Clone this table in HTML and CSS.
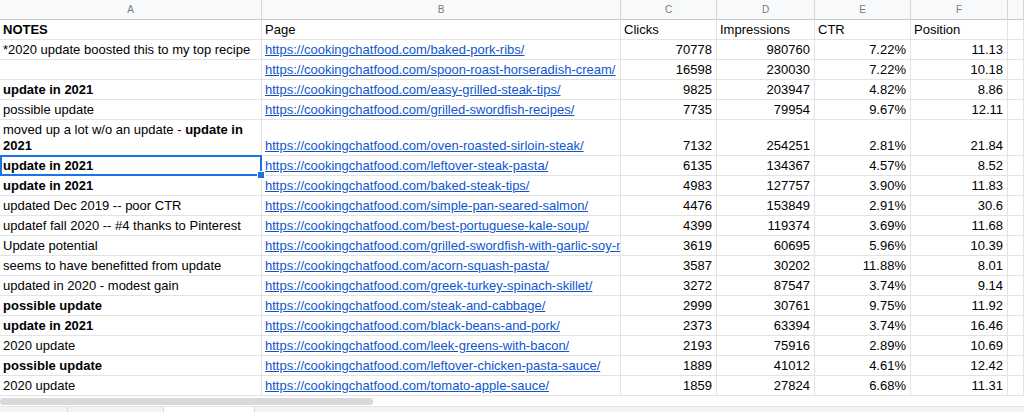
FILE: index.html
```html
<!DOCTYPE html>
<html>
<head>
<meta charset="utf-8">
<link rel="stylesheet" href="styles.css">
</head>
<body>
<div class="sheet">
  <div class="row colhead">
    <div class="c">A</div><div class="c">B</div><div class="c">C</div><div class="c">D</div><div class="c">E</div><div class="c">F</div><div class="c"></div>
  </div>
  <div class="row">
    <div class="c"><b>NOTES</b></div><div class="c">Page</div><div class="c">Clicks</div><div class="c">Impressions</div><div class="c">CTR</div><div class="c">Position</div><div class="c"></div>
  </div>
  <div class="row">
    <div class="c">*2020 update boosted this to my top recipe</div><div class="c"><a href="#">https://cookingchatfood.com/baked-pork-ribs/</a></div><div class="c n">70778</div><div class="c n">980760</div><div class="c n">7.22%</div><div class="c n">11.13</div><div class="c"></div>
  </div>
  <div class="row">
    <div class="c"></div><div class="c"><a href="#">https://cookingchatfood.com/spoon-roast-horseradish-cream/</a></div><div class="c n">16598</div><div class="c n">230030</div><div class="c n">7.22%</div><div class="c n">10.18</div><div class="c"></div>
  </div>
  <div class="row">
    <div class="c"><b>update in 2021</b></div><div class="c"><a href="#">https://cookingchatfood.com/easy-grilled-steak-tips/</a></div><div class="c n">9825</div><div class="c n">203947</div><div class="c n">4.82%</div><div class="c n">8.86</div><div class="c"></div>
  </div>
  <div class="row">
    <div class="c">possible update</div><div class="c"><a href="#">https://cookingchatfood.com/grilled-swordfish-recipes/</a></div><div class="c n">7735</div><div class="c n">79954</div><div class="c n">9.67%</div><div class="c n">12.11</div><div class="c"></div>
  </div>
  <div class="row tall">
    <div class="c wrap"><span class="wl">moved up a lot w/o an update - <b>update in</b></span><span class="wl"><b>2021</b></span></div><div class="c"><a href="#">https://cookingchatfood.com/oven-roasted-sirloin-steak/</a></div><div class="c n">7132</div><div class="c n">254251</div><div class="c n">2.81%</div><div class="c n">21.84</div><div class="c"></div>
  </div>
  <div class="row">
    <div class="c sel"><b>update in 2021</b><span class="selbox"><span class="handle"></span></span></div><div class="c"><a href="#">https://cookingchatfood.com/leftover-steak-pasta/</a></div><div class="c n">6135</div><div class="c n">134367</div><div class="c n">4.57%</div><div class="c n">8.52</div><div class="c"></div>
  </div>
  <div class="row">
    <div class="c"><b>update in 2021</b></div><div class="c"><a href="#">https://cookingchatfood.com/baked-steak-tips/</a></div><div class="c n">4983</div><div class="c n">127757</div><div class="c n">3.90%</div><div class="c n">11.83</div><div class="c"></div>
  </div>
  <div class="row">
    <div class="c">updated Dec 2019 -- poor CTR</div><div class="c"><a href="#">https://cookingchatfood.com/simple-pan-seared-salmon/</a></div><div class="c n">4476</div><div class="c n">153849</div><div class="c n">2.91%</div><div class="c n">30.6</div><div class="c"></div>
  </div>
  <div class="row">
    <div class="c">updatef fall 2020 -- #4 thanks to Pinterest</div><div class="c"><a href="#">https://cookingchatfood.com/best-portuguese-kale-soup/</a></div><div class="c n">4399</div><div class="c n">119374</div><div class="c n">3.69%</div><div class="c n">11.68</div><div class="c"></div>
  </div>
  <div class="row">
    <div class="c">Update potential</div><div class="c"><a href="#">https://cookingchatfood.com/grilled-swordfish-with-garlic-soy-m</a></div><div class="c n">3619</div><div class="c n">60695</div><div class="c n">5.96%</div><div class="c n">10.39</div><div class="c"></div>
  </div>
  <div class="row">
    <div class="c">seems to have benefitted from update</div><div class="c"><a href="#">https://cookingchatfood.com/acorn-squash-pasta/</a></div><div class="c n">3587</div><div class="c n">30202</div><div class="c n">11.88%</div><div class="c n">8.01</div><div class="c"></div>
  </div>
  <div class="row">
    <div class="c">updated in 2020 - modest gain</div><div class="c"><a href="#">https://cookingchatfood.com/greek-turkey-spinach-skillet/</a></div><div class="c n">3272</div><div class="c n">87547</div><div class="c n">3.74%</div><div class="c n">9.14</div><div class="c"></div>
  </div>
  <div class="row">
    <div class="c"><b>possible update</b></div><div class="c"><a href="#">https://cookingchatfood.com/steak-and-cabbage/</a></div><div class="c n">2999</div><div class="c n">30761</div><div class="c n">9.75%</div><div class="c n">11.92</div><div class="c"></div>
  </div>
  <div class="row">
    <div class="c"><b>update in 2021</b></div><div class="c"><a href="#">https://cookingchatfood.com/black-beans-and-pork/</a></div><div class="c n">2373</div><div class="c n">63394</div><div class="c n">3.74%</div><div class="c n">16.46</div><div class="c"></div>
  </div>
  <div class="row">
    <div class="c">2020 update</div><div class="c"><a href="#">https://cookingchatfood.com/leek-greens-with-bacon/</a></div><div class="c n">2193</div><div class="c n">75916</div><div class="c n">2.89%</div><div class="c n">10.69</div><div class="c"></div>
  </div>
  <div class="row">
    <div class="c"><b>possible update</b></div><div class="c"><a href="#">https://cookingchatfood.com/leftover-chicken-pasta-sauce/</a></div><div class="c n">1889</div><div class="c n">41012</div><div class="c n">4.61%</div><div class="c n">12.42</div><div class="c"></div>
  </div>
  <div class="row last">
    <div class="c">2020 update</div><div class="c"><a href="#">https://cookingchatfood.com/tomato-apple-sauce/</a></div><div class="c n">1859</div><div class="c n">27824</div><div class="c n">6.68%</div><div class="c n">11.31</div><div class="c"></div>
  </div>
  <div class="scroll"><div class="thumb"></div></div>
  <div class="tabs"><div class="tab t1"></div><div class="tab t2"></div><div class="tab t3"></div></div>
</div>
</body>
</html>
```

FILE: styles.css
```css
html, body {
  margin: 0;
  padding: 0;
  background: #fff;
}
.sheet {
  width: 1024px;
  height: 412px;
  overflow: hidden;
  font-family: "Liberation Sans", Arial, sans-serif;
  font-size: 13px;
  color: #000;
}
.row {
  display: grid;
  grid-template-columns: 262px 359px 96px 98px 96px 97px 1fr;
  height: 20px;
}
.row.tall {
  height: 36px;
}
.c {
  box-sizing: border-box;
  border-right: 1px solid #e3e3e3;
  border-bottom: 1px solid #e3e3e3;
  padding: 0 3px 1px 3px;
  display: flex;
  align-items: flex-end;
  white-space: nowrap;
  overflow: hidden;
  line-height: 16px;
  position: relative;
}
.c.wrap {
  flex-direction: column;
  align-items: flex-start;
  justify-content: flex-end;
}
.wl {
  display: block;
  height: 16px;
}
.c b {
  font-weight: bold;
}
.c.n {
  justify-content: flex-end;
  padding-right: 4px;
}
.c a {
  color: #1155cc;
  text-decoration: underline;
}
.colhead .c {
  background: #f8f9fa;
  color: #7a7a7a;
  font-size: 10px;
  justify-content: center;
  align-items: center;
  padding: 0;
  border-right: 1px solid #d6d6d6;
  border-bottom: 1px solid #c8c8c8;
}
.c.sel {
  overflow: visible;
  z-index: 2;
}
.selbox {
  position: absolute;
  left: 0;
  top: -1px;
  right: -1px;
  bottom: -1px;
  border: 2px solid #1a73e8;
  pointer-events: none;
}
.handle {
  position: absolute;
  right: -5px;
  bottom: -5px;
  width: 6px;
  height: 6px;
  background: #1a73e8;
  border: 1px solid #fff;
}
.scroll {
  height: 10px;
  padding-top: 2px;
  box-sizing: border-box;
}
.thumb {
  width: 373px;
  height: 7px;
  border-radius: 4px;
  background: #d9d9d9;
}
.tabs {
  height: 10px;
  background: #f1f3f4;
  border-top: 1px solid #e6e6e6;
  display: flex;
}
.tab {
  height: 100%;
  border-right: 1px solid #d8d8d8;
}
.t1 { width: 67px; }
.t2 { width: 95px; }
.t3 { width: 90px; background: #fff; }
```
